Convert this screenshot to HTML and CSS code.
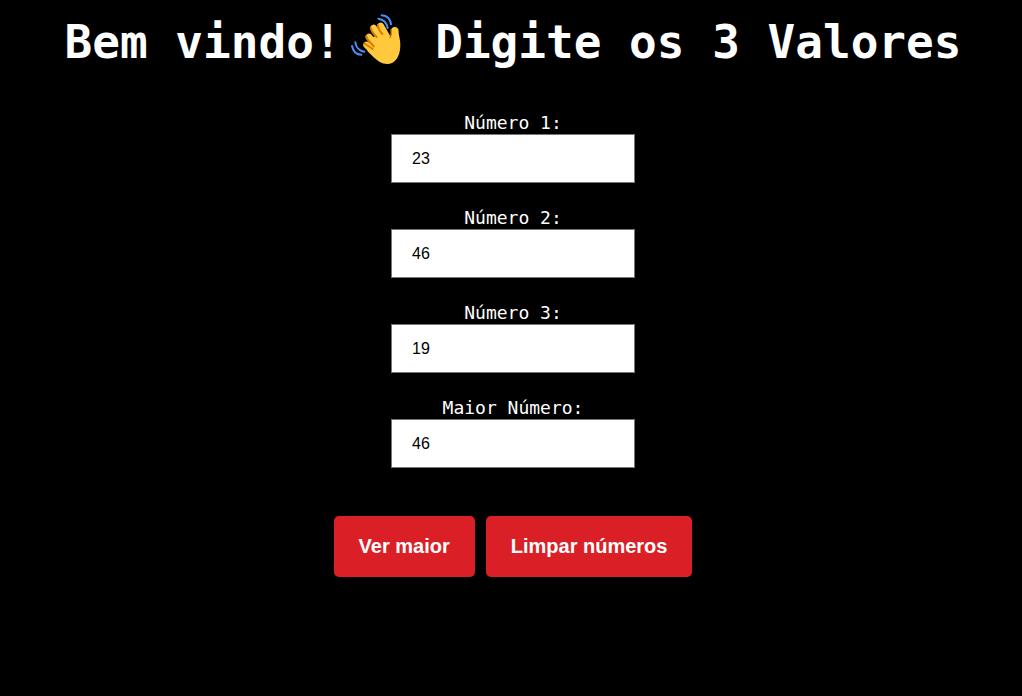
FILE: index.html
```html
<!DOCTYPE html>
<html lang="pt-BR">
<head>
<meta charset="utf-8">
<meta name="viewport" content="width=device-width, initial-scale=1">
<title>Maior número</title>
<link rel="stylesheet" href="styles.css">
</head>
<body>
<main class="page">
  <h1 class="title">Bem vindo!<svg class="wave" viewBox="6 21 198 168" role="img" aria-label="Mão acenando">
    <g fill="none" stroke="#4a8ff5" stroke-width="6" stroke-linecap="round">
      <path d="M125 31C141 32 151 43 153 58"/>
      <path d="M115 41C130 43 140 53 143 69"/>
      <path d="M46 112C48 126 58 138 73 140"/>
      <path d="M36 123C39 138 49 149 64 149"/>
    </g>
    <g fill="none" stroke="#ffc83d" stroke-width="20" stroke-linecap="round">
      <path d="M122 63L145 103"/>
      <path d="M101 69L132 116"/>
      <path d="M87 96L118 130"/>
      <path d="M80 120L112 150"/>
    </g>
    <path fill="#ffc83d" d="M104 94L136 78L149 98C159 91 150 73 156 69C164 63 176 67 176 78C175 91 181 102 181 119C181 154 165 177 142 177C125 177 113 168 101 157L82 138L90 108Z"/>
    <path fill="none" stroke="#d67d00" stroke-width="6" stroke-linecap="round" d="M93 70C94 80 102 88 110 96M79 94C80 104 92 113 101 124M114 60C114 70 120 79 127 87M73 115C77 119 90 126 98 132"/>
    <path fill="none" stroke="#d67d00" stroke-width="4" stroke-linecap="round" d="M153 74C154 85 155 92 150 98"/>
  </svg> Digite os 3 Valores</h1>
  <form class="form">
    <div class="field">
      <label for="n1">Número 1:</label>
      <input id="n1" type="text" inputmode="numeric" value="23">
    </div>
    <div class="field">
      <label for="n2">Número 2:</label>
      <input id="n2" type="text" inputmode="numeric" value="46">
    </div>
    <div class="field">
      <label for="n3">Número 3:</label>
      <input id="n3" type="text" inputmode="numeric" value="19">
    </div>
    <div class="field">
      <label for="maior">Maior Número:</label>
      <input id="maior" type="text" value="46" readonly>
    </div>
    <div class="actions">
      <button class="button" type="button">Ver maior</button>
      <button class="button" type="reset">Limpar números</button>
    </div>
  </form>
</main>
</body>
</html>
```
FILE: styles.css
```css
* {
  box-sizing: border-box;
}

body {
  margin: 0;
  background: #000;
  color: #fff;
  font-family: "DejaVu Sans Mono", monospace;
}

.page {
  display: flex;
  flex-direction: column;
  align-items: center;
  gap: 40px;
  padding: 12px 8px 12px 12px;
}

.title {
  margin: 0;
  font-size: 46px;
  line-height: 60px;
  font-weight: bold;
  text-align: center;
}

.wave {
  width: 66px;
  height: 56px;
  vertical-align: -10px;
}

.form {
  display: flex;
  flex-direction: column;
  align-items: center;
  gap: 24px;
}

.field {
  display: flex;
  flex-direction: column;
  align-items: center;
}

.field label {
  font-size: 18px;
  line-height: 22px;
}

.field input {
  width: 244px;
  padding: 14px 20px;
  border: 1px solid #767676;
  border-radius: 0;
  background: #fff;
  color: #000;
  font-family: "Liberation Sans", Arial, sans-serif;
  font-size: 16px;
  line-height: 19px;
}

.actions {
  display: flex;
  flex-wrap: wrap;
  justify-content: center;
  gap: 11px;
  padding-top: 24px;
}

.button {
  padding: 19px 25px;
  border: 0;
  border-radius: 5px;
  background: #db1f26;
  color: #fff;
  font-family: "Liberation Sans", Arial, sans-serif;
  font-size: 20px;
  line-height: 23px;
  font-weight: bold;
  cursor: pointer;
}
```
